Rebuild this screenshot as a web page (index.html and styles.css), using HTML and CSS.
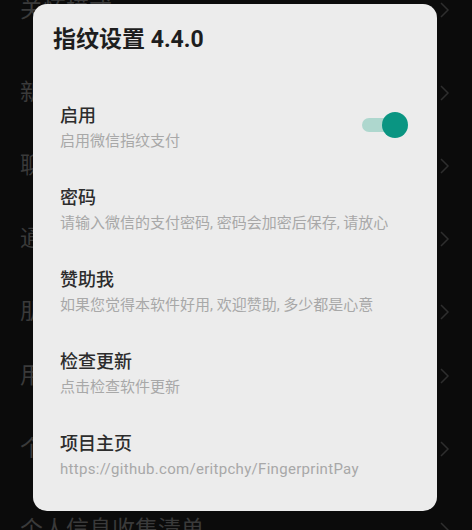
FILE: index.html
```html
<!DOCTYPE html>
<html lang="zh-CN">
<head>
<meta charset="utf-8">
<title>指纹设置</title>
<link rel="stylesheet" href="styles.css">
</head>
<body>
<div class="screen">
  <ul class="bg-list">
    <li class="bg-row first"><span>关怀模式</span><svg class="chev" viewBox="0 0 10 16"><polyline points="1,1 8,8 1,15"/></svg></li>
    <li class="bg-row"><span>新消息通知</span><svg class="chev" viewBox="0 0 10 16"><polyline points="1,1 8,8 1,15"/></svg></li>
    <li class="bg-row"><span>聊天</span><svg class="chev" viewBox="0 0 10 16"><polyline points="1,1 8,8 1,15"/></svg></li>
    <li class="bg-row"><span>通用</span><svg class="chev" viewBox="0 0 10 16"><polyline points="1,1 8,8 1,15"/></svg></li>
    <li class="bg-row short"><span>朋友权限</span><svg class="chev" viewBox="0 0 10 16"><polyline points="1,1 8,8 1,15"/></svg></li>
    <li class="bg-row"><span>用户协议</span><svg class="chev" viewBox="0 0 10 16"><polyline points="1,1 8,8 1,15"/></svg></li>
    <li class="bg-row tall"><span>个人信息与权限</span><svg class="chev" viewBox="0 0 10 16"><polyline points="1,1 8,8 1,15"/></svg></li>
    <li class="bg-row"><span>个人信息收集清单</span><svg class="chev" viewBox="0 0 10 16"><polyline points="1,1 8,8 1,15"/></svg></li>
  </ul>

  <div class="dialog">
    <h1 class="dialog-title">指纹设置 4.4.0</h1>
    <div class="pref">
      <div class="pref-text">
        <div class="pref-title">启用</div>
        <div class="pref-sub">启用微信指纹支付</div>
      </div>
      <div class="switch"><span class="track"></span><span class="thumb"></span></div>
    </div>
    <div class="pref">
      <div class="pref-text">
        <div class="pref-title">密码</div>
        <div class="pref-sub">请输入微信的支付密码, 密码会加密后保存, 请放心</div>
      </div>
    </div>
    <div class="pref">
      <div class="pref-text">
        <div class="pref-title">赞助我</div>
        <div class="pref-sub">如果您觉得本软件好用, 欢迎赞助, 多少都是心意</div>
      </div>
    </div>
    <div class="pref">
      <div class="pref-text">
        <div class="pref-title">检查更新</div>
        <div class="pref-sub">点击检查软件更新</div>
      </div>
    </div>
    <div class="pref">
      <div class="pref-text">
        <div class="pref-title">项目主页</div>
        <div class="pref-sub url">https://github.com/eritpchy/FingerprintPay</div>
      </div>
    </div>
  </div>
</div>
</body>
</html>
```

FILE: styles.css
```css
* { box-sizing: border-box; }
html, body {
  margin: 0;
  padding: 0;
  background: #0b0b0b;
  font-family: Roboto, "Noto Sans CJK SC", sans-serif;
}
.screen {
  position: relative;
  width: 472px;
  height: 530px;
  overflow: hidden;
}
.bg-list {
  list-style: none;
  margin: 0;
  padding: 0;
}
.bg-row {
  display: flex;
  justify-content: space-between;
  align-items: center;
  height: 30px;
  margin-bottom: 43px;
  padding: 0 22px 0 20px;
  color: #3a3a3a;
  font-size: 23px;
  line-height: 30px;
}
.bg-row.first {
  height: 20px;
  line-height: 20px;
  margin-bottom: 58px;
}
.bg-row.short { margin-bottom: 34px; }
.bg-row.tall { margin-bottom: 51px; }
.chev {
  width: 10px;
  height: 16px;
  fill: none;
  stroke: #2e2e2e;
  stroke-width: 1.5;
}
.dialog {
  position: absolute;
  left: 33px;
  top: 4px;
  width: 404px;
  height: 507px;
  background: #ececec;
  border-radius: 14px;
  padding: 22px 29px 0 27px;
}
.dialog-title {
  margin: 0 0 34px -7px;
  font-size: 23px;
  line-height: 28px;
  font-weight: 700;
  color: #1e1e1e;
}
.pref {
  display: flex;
  justify-content: space-between;
  align-items: center;
  height: 82px;
  padding: 16px 0;
}
.pref-title {
  font-size: 18px;
  line-height: 24px;
  font-weight: 500;
  color: #2c2c2c;
}
.pref-sub {
  font-size: 15px;
  line-height: 26px;
  color: #a8a8a8;
  white-space: nowrap;
}
.pref-sub.url { letter-spacing: 0.3px; }
.switch {
  position: relative;
  width: 46px;
  height: 26px;
  margin-bottom: 8px;
}
.track {
  position: absolute;
  left: 0;
  top: 6px;
  width: 40px;
  height: 14px;
  border-radius: 7px;
  background: #aed7ce;
}
.thumb {
  position: absolute;
  right: 0;
  top: 0;
  width: 26px;
  height: 26px;
  border-radius: 50%;
  background: #0a9582;
}
```
